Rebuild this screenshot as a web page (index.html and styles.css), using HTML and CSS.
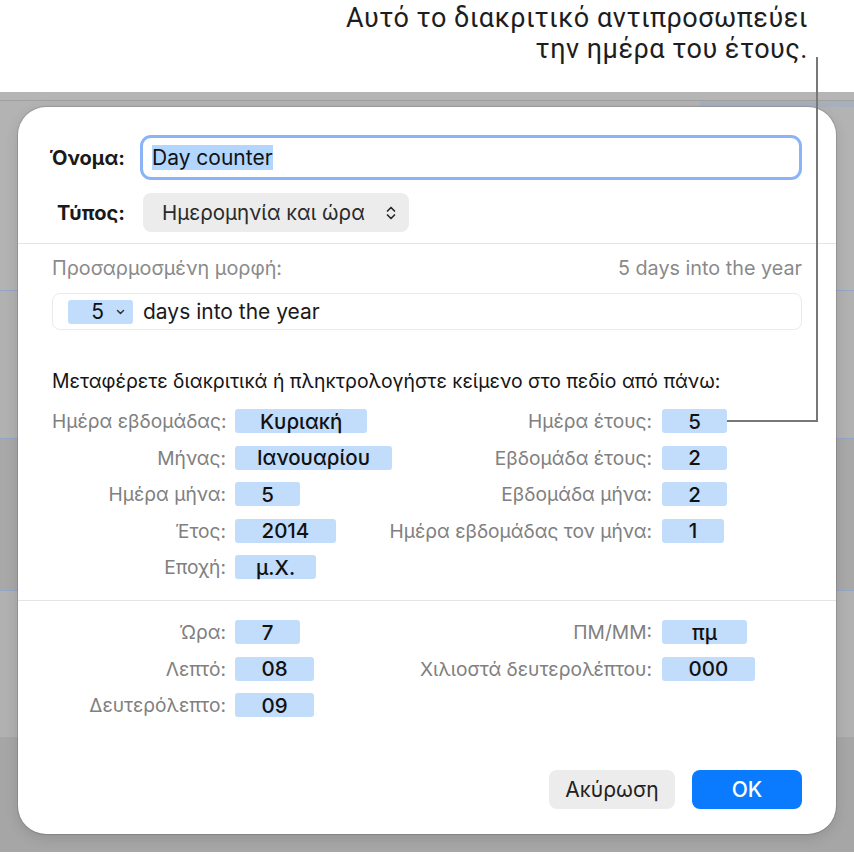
FILE: index.html
```html
<!DOCTYPE html>
<html lang="el">
	<head>
		<meta charset="UTF-8" />
		<meta name="viewport" content="width=device-width, initial-scale=1.0" />
		<title>Προσαρμοσμένη μορφή</title>
		<link rel="stylesheet" href="styles.css">
	</head>
	<body>
		<div class="callout">
			<p>Αυτό το διακριτικό αντιπροσωπεύει<br>την ημέρα του έτους.</p>
		</div>

		<div class="desk">
			<div class="dialog">
				<div class="head">
					<div class="field-row">
						<label>Όνομα:</label>
						<div class="name-input"><span class="selected-text">Day counter</span></div>
					</div>
					<div class="field-row">
						<label>Τύπος:</label>
						<div class="popup">
							Ημερομηνία και ώρα
							<svg class="updown" width="10" height="16" viewBox="0 0 10 16">
								<path d="M1.5 6 L5 2.5 L8.5 6 M1.5 10 L5 13.5 L8.5 10" fill="none" stroke="#2a2a2a" stroke-width="1.7" stroke-linecap="round" stroke-linejoin="round"/>
							</svg>
						</div>
					</div>
				</div>

				<div class="section">
					<div class="format-head">
						<span>Προσαρμοσμένη μορφή:</span>
						<span>5 days into the year</span>
					</div>
					<div class="token-field">
						<span class="token token-menu">5
							<svg width="9" height="6" viewBox="0 0 9 6">
								<path d="M1.5 1.5 L4.5 4.5 L7.5 1.5" fill="none" stroke="#333" stroke-width="1.5" stroke-linecap="round" stroke-linejoin="round"/>
							</svg>
						</span>
						<span>days into the year</span>
					</div>
					<p class="hint">Μεταφέρετε διακριτικά ή πληκτρολογήστε κείμενο στο πεδίο από πάνω:</p>

					<div class="token-grid">
						<span class="tlabel">Ημέρα εβδομάδας:</span>
						<span class="token">Κυριακή</span>
						<span class="tlabel">Ημέρα έτους:</span>
						<span class="token">5</span>

						<span class="tlabel">Μήνας:</span>
						<span class="token tight">Ιανουαρίου</span>
						<span class="tlabel">Εβδομάδα έτους:</span>
						<span class="token">2</span>

						<span class="tlabel">Ημέρα μήνα:</span>
						<span class="token">5</span>
						<span class="tlabel">Εβδομάδα μήνα:</span>
						<span class="token">2</span>

						<span class="tlabel">Έτος:</span>
						<span class="token wide">2014</span>
						<span class="tlabel">Ημέρα εβδομάδας τον μήνα:</span>
						<span class="token narrow">1</span>

						<span class="tlabel">Εποχή:</span>
						<span class="token slim">μ.Χ.</span>
					</div>
				</div>

				<div class="section time">
					<div class="token-grid">
						<span class="tlabel">Ώρα:</span>
						<span class="token">7</span>
						<span class="tlabel">ΠΜ/ΜΜ:</span>
						<span class="token roomy">πμ</span>

						<span class="tlabel">Λεπτό:</span>
						<span class="token wide">08</span>
						<span class="tlabel">Χιλιοστά δευτερολέπτου:</span>
						<span class="token wide">000</span>

						<span class="tlabel">Δευτερόλεπτο:</span>
						<span class="token wide">09</span>
					</div>
				</div>

				<div class="actions">
					<button class="btn">Ακύρωση</button>
					<button class="btn primary">OK</button>
				</div>
			</div>
		</div>

		<!-- leader line from the caption to the day-of-year token -->
		<div class="leader leader-v"></div>
		<div class="leader leader-h"></div>
	</body>
</html>
```

FILE: styles.css
```css
body {
	margin: 0;
	font-family: Inter, "Noto Sans", sans-serif;
	color: #1c1c1c;
	background: #fff;
	position: relative;
	width: 854px;
	height: 854px;
	overflow: hidden;
}
.callout {
	height: 92px;
	display: flex;
	justify-content: flex-end;
}
.callout p {
	margin: 3px 46px 0 0;
	font-family: Roboto, "Liberation Sans", sans-serif;
	font-size: 27px;
	line-height: 31px;
	letter-spacing: 0.5px;
	text-align: right;
	color: #1d1d1d;
}

/* window behind the sheet */
.desk {
	height: 760px;
	padding: 15px 0 0 18px;
	box-sizing: border-box;
	background:
		linear-gradient(90deg, transparent 0 700px, rgba(150, 170, 200, 0.4) 700px) 0 9px / 100% 6px no-repeat,
		linear-gradient(#b5b5b5 0 8px, #a0a0a0 8px 9px, #b3b3b3 9px 198px, #93a6c8 198px 199px,
			#b1b1b1 199px 346px, #93a6c8 346px 347px, #a8a8a8 347px 498px, #93a6c8 498px 499px,
			#b1b1b1 499px 645px, #a6a6a6 645px 760px);
}
.dialog {
	width: 818px;
	height: 727px;
	background: #fff;
	border-radius: 28px;
	box-shadow: 0 0 0 1px rgba(0, 0, 0, 0.12), 0 4px 14px rgba(0, 0, 0, 0.12);
	display: flex;
	flex-direction: column;
}

.head {
	padding: 28px 34px 11px 0;
	border-bottom: 1px solid #e4e4e4;
	display: flex;
	flex-direction: column;
	gap: 13px;
}
.field-row {
	display: flex;
	align-items: center;
	gap: 15px;
}
.field-row label {
	width: 107px;
	text-align: right;
	font-weight: 700;
	font-size: 20px;
	color: #1a1a1a;
}
.name-input {
	flex: 1;
	height: 45px;
	box-sizing: border-box;
	border: 3px solid #8ab3f8;
	border-radius: 11px;
	padding-left: 9px;
	display: flex;
	align-items: center;
	font-size: 21px;
}
.selected-text {
	background: #b3d6fe;
	line-height: 25px;
	color: #111;
}
.popup {
	margin-left: 3px;
	height: 39px;
	box-sizing: border-box;
	padding: 0 13px 0 19px;
	background: #ececec;
	border-radius: 8px;
	display: flex;
	align-items: center;
	gap: 21px;
	font-size: 20.5px;
	color: #2a2a2a;
}

.section {
	padding: 13px 34px 21px;
	border-bottom: 1px solid #e4e4e4;
}
.section.time {
	padding-top: 19px;
	border-bottom: none;
}
.format-head {
	display: flex;
	justify-content: space-between;
	font-size: 19.8px;
	line-height: 22px;
	color: #8a8a8a;
}
.token-field {
	margin-top: 14px;
	height: 37px;
	box-sizing: border-box;
	border: 1px solid #ebebeb;
	border-radius: 8px;
	padding-left: 15px;
	display: flex;
	align-items: center;
	gap: 10px;
	font-size: 21px;
	color: #1a1a1a;
}
.hint {
	margin: 40px 0 17px;
	font-size: 19.4px;
	line-height: 22px;
	color: #151515;
}

.token-grid {
	display: grid;
	grid-template-columns: 174px 1fr auto 102px;
	grid-auto-rows: 24px;
	row-gap: 12.5px;
	padding-right: 48px;
	align-items: center;
}
.tlabel {
	text-align: right;
	font-size: 19.2px;
	color: #808080;
	white-space: nowrap;
}
.token {
	justify-self: start;
	height: 24px;
	min-width: 65px;
	box-sizing: border-box;
	padding: 0 25px;
	background: #c2dcfc;
	border-radius: 3px;
	display: inline-flex;
	align-items: center;
	justify-content: center;
	font-size: 20.5px;
	font-weight: 500;
	color: #111;
}
.token-grid .token:nth-child(4n + 2) {
	margin-left: 9px;
}
.token-grid .token:nth-child(4n) {
	margin-left: 10px;
}
.token.narrow {
	min-width: 62px;
}
.token.tight {
	padding: 0 22px;
}
.token.slim {
	padding: 0 21px;
}
.token.wide {
	padding: 0 26.5px;
}
.token.roomy {
	padding: 0 30px;
}
.token-menu {
	width: 65px;
	padding: 0 8px 0 0;
	justify-content: flex-end;
	gap: 12px;
	font-size: 21px;
	font-weight: 400;
}

.actions {
	margin-top: auto;
	padding: 0 34px 25px;
	display: flex;
	justify-content: flex-end;
	gap: 17px;
}
.btn {
	height: 39px;
	border: none;
	border-radius: 8px;
	background: #ececec;
	color: #222;
	font-family: inherit;
	font-size: 21px;
	width: 126px;
}
.btn.primary {
	width: 110px;
	background: #0a7aff;
	color: #fff;
	font-weight: 500;
}

.leader {
	position: absolute;
	background: #777;
}
.leader-v {
	left: 816px;
	top: 57px;
	width: 2px;
	height: 365px;
}
.leader-h {
	left: 727px;
	top: 420px;
	width: 91px;
	height: 2px;
}
```
